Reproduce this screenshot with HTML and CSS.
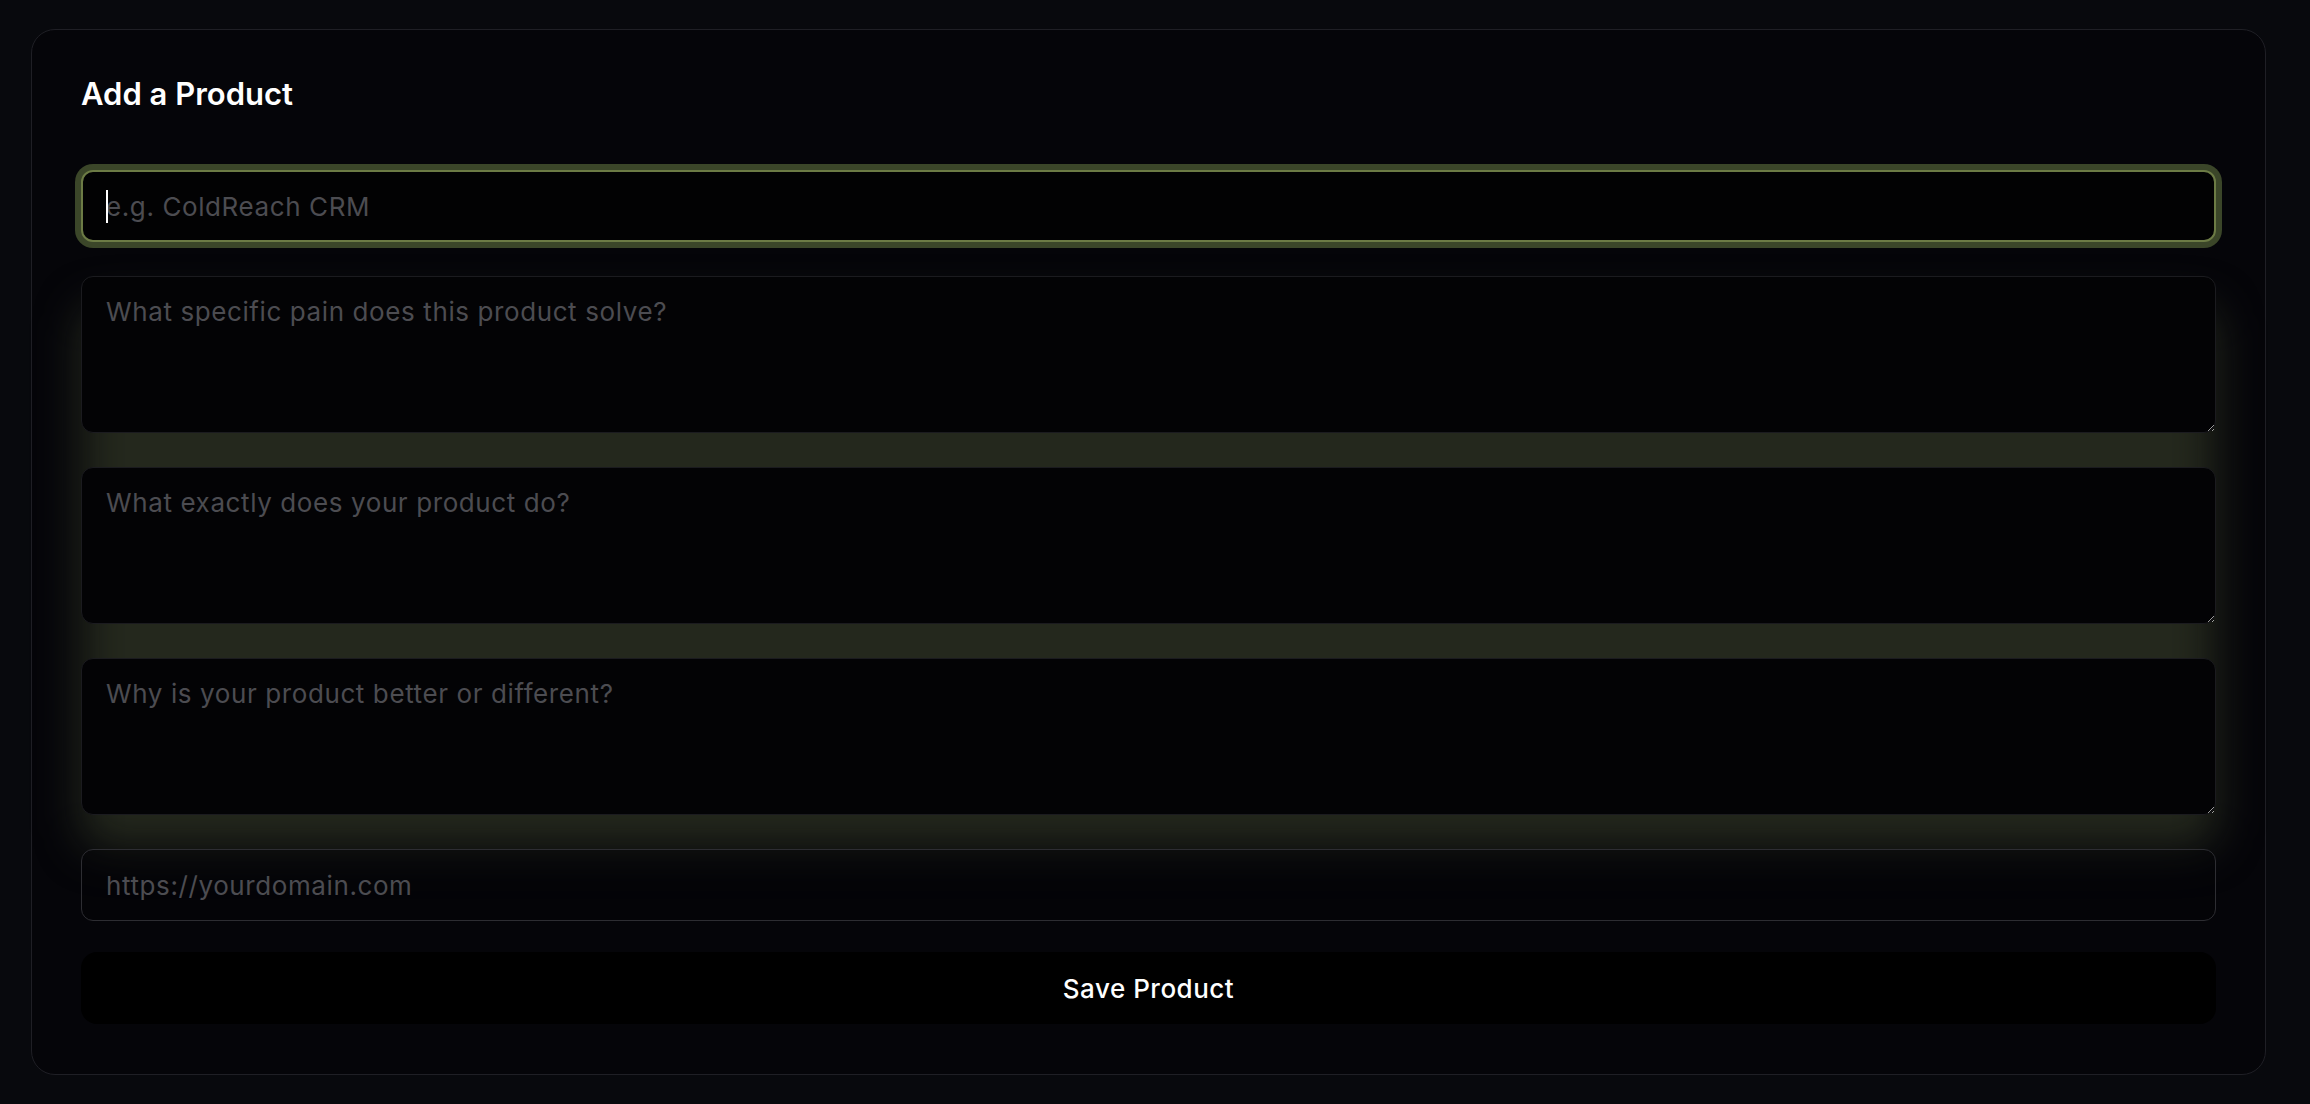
FILE: index.html
```html
<!DOCTYPE html>
<html lang="en">
<head>
<meta charset="utf-8">
<title>Add a Product</title>
<link rel="stylesheet" href="styles.css">
</head>
<body>
  <main class="page">
    <section class="card">
      <h2 class="card-title">Add a Product</h2>
      <form class="product-form">
        <div class="field-focus">
          <input class="field field--focused" type="text" placeholder="e.g. ColdReach CRM">
          <span class="caret"></span>
        </div>
        <div class="textarea-group">
          <textarea class="field field--area" placeholder="What specific pain does this product solve?"></textarea>
          <textarea class="field field--area" placeholder="What exactly does your product do?"></textarea>
          <textarea class="field field--area" placeholder="Why is your product better or different?"></textarea>
        </div>
        <input class="field field--url" type="text" placeholder="https://yourdomain.com">
        <button class="save-btn" type="button">Save Product</button>
      </form>
    </section>
  </main>
</body>
</html>
```
FILE: styles.css
```css
* { box-sizing: border-box; }

html, body {
  margin: 0;
  background: #08090d;
  height: 100%;
}

body {
  font-family: Inter, "Noto Sans", "Liberation Sans", sans-serif;
  color: #ffffff;
}

.page {
  padding: 29px 44px 0 31px;
}

.card {
  background: #050509;
  border: 1px solid #1f1f25;
  border-radius: 24px;
  padding: 48px 49px 50px 49px;
}

.card-title {
  margin: -2px 0 58px 0;
  font-size: 31px;
  line-height: 36px;
  font-weight: 600;
  color: #ffffff;
  letter-spacing: 0;
}

.product-form {
  display: flex;
  flex-direction: column;
  gap: 34px;
}

.field {
  display: block;
  width: 100%;
  font-family: inherit;
  font-size: 26px;
  letter-spacing: 0.6px;
  line-height: 36px;
  color: #e6e6e6;
  background: #030305;
  border: 1px solid #1b1b1f;
  border-radius: 12px;
  padding: 17px 24px;
  outline: none;
  margin: 0;
}

.field::placeholder {
  color: #4c4c51;
  opacity: 1;
}

.field-focus {
  position: relative;
}

.field--focused {
  height: 72px;
  background: #020203;
  border: 2px solid #6c7b45;
  padding: 16px 23px;
  box-shadow: 0 0 0 6px #3b4629;
}

.caret {
  position: absolute;
  left: 25px;
  top: 20px;
  width: 2px;
  height: 33px;
  background: #ffffff;
}

.textarea-group {
  position: relative;
  display: flex;
  flex-direction: column;
  gap: 34px;
  isolation: isolate;
}

.textarea-group::before {
  content: "";
  position: absolute;
  left: 0;
  right: 0;
  top: 30px;
  bottom: -32px;
  background: #24281d;
  filter: blur(22px);
  z-index: -1;
  border-radius: 24px;
}

.field--area {
  height: 157px;
  padding-top: 17px;
  resize: vertical;
}

.field--url {
  position: relative;
  height: 72px;
  background: rgba(3, 3, 5, 0.35);
  border: 1px solid #2d2d32;
}

.save-btn {
  position: relative;
  height: 72px;
  width: 100%;
  margin-top: -3px;
  border: none;
  border-radius: 16px;
  background: #000000;
  color: #ffffff;
  font-family: inherit;
  font-size: 26px;
  letter-spacing: 0.5px;
  font-weight: 500;
  cursor: pointer;
}
```
